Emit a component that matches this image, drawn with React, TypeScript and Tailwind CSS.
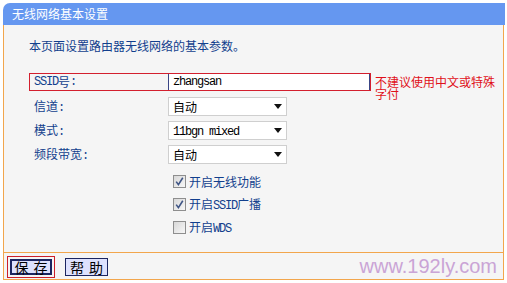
import React from "react";

const M = ({ children }: { children: React.ReactNode }) => (
  <span className="font-['Liberation_Mono',monospace] text-[12px] tracking-[-1.2px]">{children}</span>
);

const Arrow = () => (
  <svg width="8" height="5" viewBox="0 0 8 5">
    <path d="M0 0H8L4 5Z" fill="#111" />
  </svg>
);

const Select = ({ children }: { children: React.ReactNode }) => (
  <div className="w-[119px] h-full bg-white border border-[#cfcfcf] flex items-center justify-between pl-[4px] pr-[4px] text-black">
    <span className="leading-[14px]">{children}</span>
    <Arrow />
  </div>
);

const Check = ({ checked }: { checked: boolean }) => (
  <div className="w-[13px] h-[13px] border border-[#8e8e8e] bg-gradient-to-br from-[#d8d8d8] to-[#f7f7f7] flex items-center justify-center">
    {checked && (
      <svg width="11" height="11" viewBox="0 0 11 11">
        <path d="M2.2 5.6 L4.4 8.6 L8.8 1.8" fill="none" stroke="#3f5585" strokeWidth="1.6" />
      </svg>
    )}
  </div>
);

export default function App() {
  return (
    <div className="w-[507px] h-[283px] bg-white overflow-hidden pt-[3px] pl-[3px] font-['Noto_Sans_CJK_SC',sans-serif] text-[12px]">
      <div className="w-[502px]">
        <div className="h-[22px] bg-[#6597f0] rounded-tl-[7px] text-white flex items-center pl-[9px] leading-[14px]">
          无线网络基本设置
        </div>
        <div className="w-[501px] h-[228px] bg-[#f5f5f5] border-l border-r border-b border-[#f2a64c] pl-[25px] text-[#123f8d]">
          <div className="pt-[14px] leading-[14px]">本页面设置路由器无线网络的基本参数。</div>
          <div className="mt-[20px] h-[18px] flex items-start">
            <div className="w-[342px] h-[18px] border border-[#d31f2e] flex items-stretch">
              <div className="w-[138px] pl-[4px] flex items-center leading-[14px]">
                <M>SSID</M>号<M>:</M>
              </div>
              <div className="flex-1 bg-white border-l border-r border-[#3a4585] flex items-center pl-[4px] text-black">
                <M>zhangsan</M>
              </div>
            </div>
            <div className="ml-[4px] mt-[3px] w-[124px] text-[#e0101a] leading-[12px]">不建议使用中文或特殊字付</div>
          </div>
          <div className="mt-[6px] flex flex-col gap-[5px]">
            <div className="h-[19px] flex items-center">
              <div className="w-[139px] pl-[5px] leading-[14px]">
                信道<M>:</M>
              </div>
              <Select>自动</Select>
            </div>
            <div className="h-[19px] flex items-center">
              <div className="w-[139px] pl-[5px] leading-[14px]">
                模式<M>:</M>
              </div>
              <Select>
                <M>11bgn mixed</M>
              </Select>
            </div>
            <div className="h-[19px] flex items-center">
              <div className="w-[139px] pl-[5px] leading-[14px]">
                频段带宽<M>:</M>
              </div>
              <Select>自动</Select>
            </div>
          </div>
          <div className="mt-[6px] flex flex-col">
            <div className="h-[23px] pl-[144px] flex items-center gap-[3px]">
              <Check checked />
              <span className="leading-[14px]">开启无线功能</span>
            </div>
            <div className="h-[23px] pl-[144px] flex items-center gap-[3px]">
              <Check checked />
              <span className="leading-[14px]">
                开启<M>SSID</M>广播
              </span>
            </div>
            <div className="h-[23px] pl-[144px] flex items-center gap-[3px]">
              <Check checked={false} />
              <span className="leading-[14px]">
                开启<M>WDS</M>
              </span>
            </div>
          </div>
        </div>
        <div className="w-[501px] h-[27px] bg-[#f5f5f5] border-l border-r border-b border-[#f2a64c] flex items-start">
          <div className="ml-[3px] mt-[3px] w-[48px] h-[22px] border border-[#cc1f2a] p-[2px]">
            <div className="w-full h-full bg-[#dde1fd] border-2 border-[#1b2560] flex items-center justify-center gap-[5px] text-black text-[14px] leading-[14px] whitespace-nowrap">
              <span>保</span>
              <span>存</span>
            </div>
          </div>
          <div className="ml-[10px] mt-[5px] w-[43px] h-[18px] bg-[#dde1fd] border-[1.5px] border-[#1b2560] flex items-center justify-center gap-[5px] text-black text-[14px] leading-[14px] whitespace-nowrap">
            <span>帮</span>
            <span>助</span>
          </div>
          <div className="ml-auto mr-[6px] mt-[2px] font-['Liberation_Sans',Arial,sans-serif] text-[20px] leading-[22px] text-[#caa4d6]">
            www.192ly.com
          </div>
        </div>
      </div>
    </div>
  );
}
